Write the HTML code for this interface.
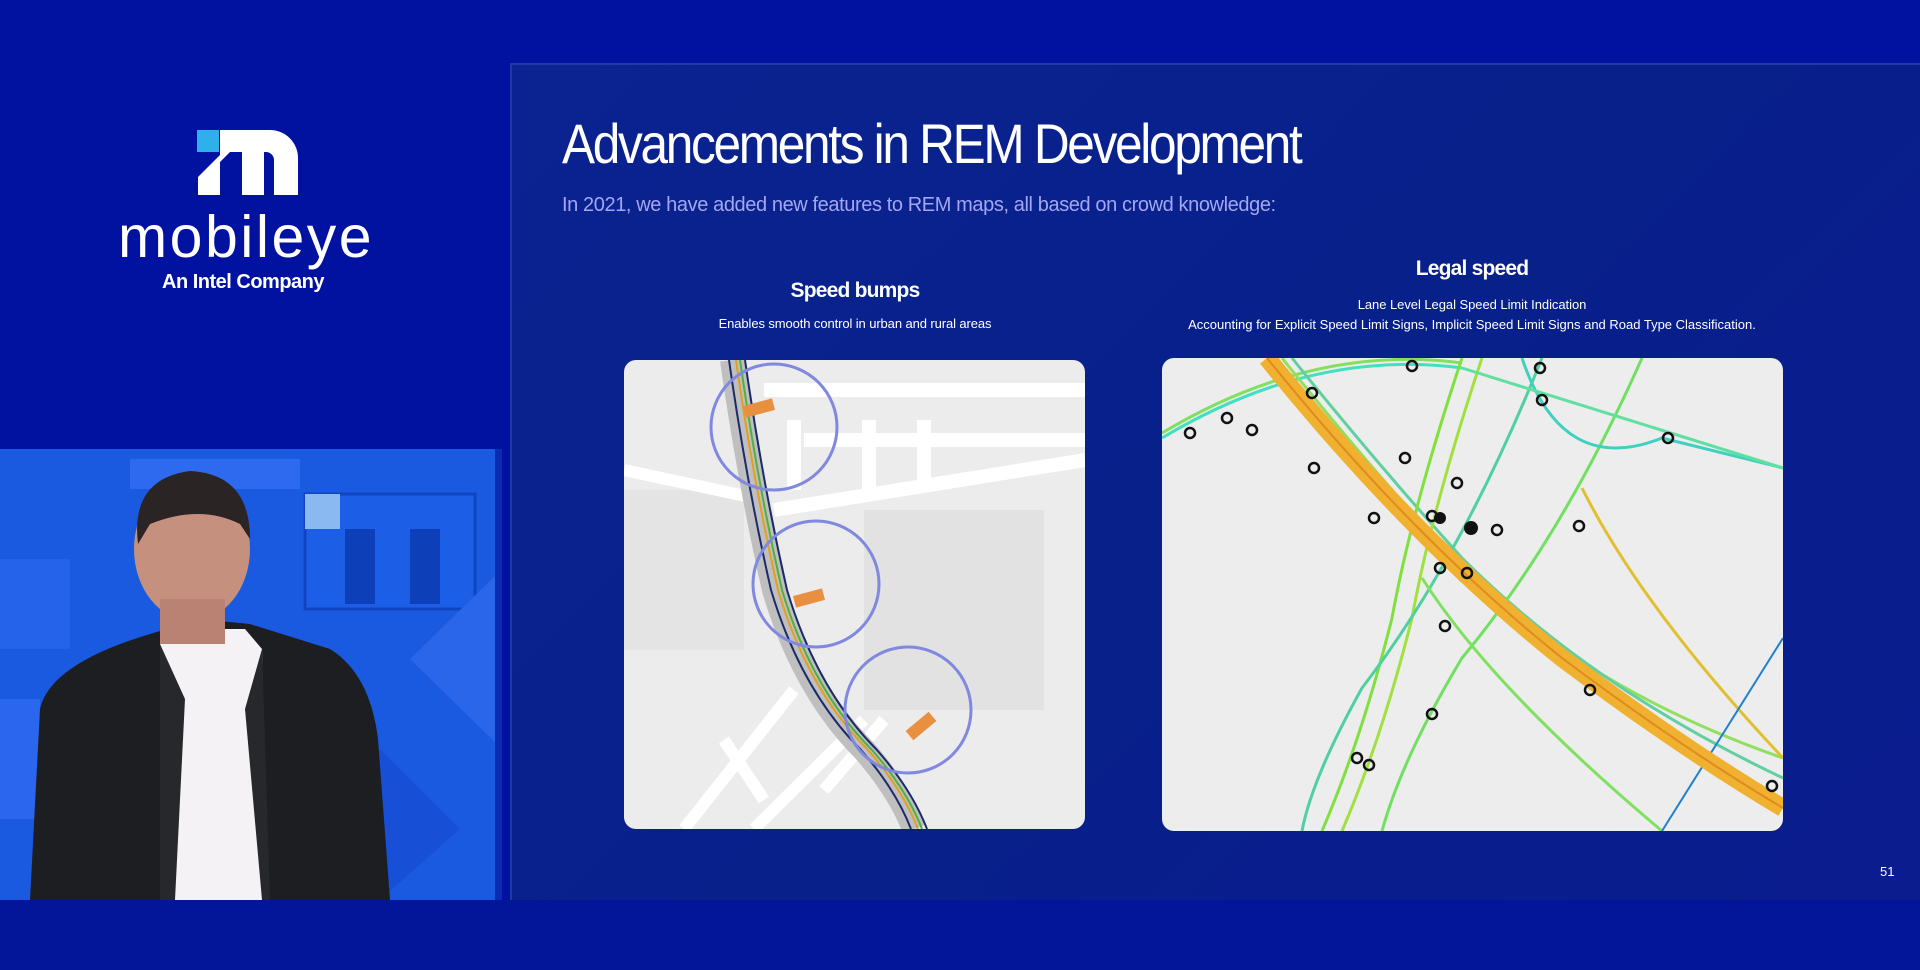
<!DOCTYPE html>
<html><head><meta charset="utf-8"><style>
*{margin:0;padding:0;box-sizing:border-box}
body{width:1920px;height:970px;overflow:hidden;background:#0212a0;font-family:"Liberation Sans",sans-serif;position:relative}
.abs{position:absolute}
.slide{left:510px;top:63px;width:1410px;height:837px;background:linear-gradient(135deg,#0a2390 0%,#08208a 50%,#0a1c8e 100%);border-top:2px solid #1d3aa8;border-left:2px solid #1d3aa8}
.t{color:#fff;white-space:nowrap}
.c{transform:translateX(-50%)}
</style></head><body>
<div class="abs" style="left:0;top:900px;width:1920px;height:70px;background:#03169a"></div>
<div class="abs slide"></div>

<!-- logo -->
<svg class="abs" style="left:190px;top:125px" width="120" height="75" viewBox="0 0 120 75">
<rect x="7" y="5" width="22" height="22" fill="#2fb0ea"/>
<path d="M30 5 H80 A28 28 0 0 1 108 33 V70 H84 V35 A8 8 0 0 0 76 27 H74 V70 H52 V27 H40 L30 37 V70 H8 V52 L30 30 Z" fill="#fff"/>
</svg>
<div class="abs t" style="left:118px;top:206px;font-size:59px;letter-spacing:2.5px;line-height:62px">mobileye</div>
<div class="abs t" style="left:162px;top:271px;font-size:20px;font-weight:bold;letter-spacing:-0.5px">An Intel Company</div>

<!-- video -->
<svg class="abs" style="left:0;top:449px" width="502" height="451" viewBox="0 0 502 451">
<rect width="502" height="451" fill="#1a5ae0"/>
<rect x="130" y="10" width="170" height="30" fill="#2d6af0"/>
<rect x="305" y="45" width="170" height="115" fill="#1d5ee6" stroke="#0f45c0" stroke-width="3"/>
<rect x="345" y="80" width="30" height="75" fill="#0c3fb8"/>
<rect x="410" y="80" width="30" height="75" fill="#0c3fb8"/>
<rect x="305" y="45" width="35" height="35" fill="#8ab8f0"/>
<path d="M410 210 L502 120 V300 Z" fill="#2a66ea"/>
<path d="M380 300 L460 380 L380 451 H300 Z" fill="#1750d6"/>
<rect x="0" y="110" width="70" height="90" fill="#2564ea"/>
<rect x="0" y="250" width="40" height="120" fill="#2a66ee"/>
<rect x="495" y="0" width="7" height="451" fill="#0b2bb0"/>
<path d="M30 451 L40 260 Q50 215 150 185 L200 170 L250 175 L330 200 Q370 225 378 290 L390 451 Z" fill="#1d1e22"/>
<path d="M160 195 L195 180 L245 180 L262 200 L268 451 H175 Z" fill="#f4f2f4"/>
<path d="M160 195 L185 250 L175 451 H160 Z M262 200 L245 260 L262 451 H270 Z" fill="#27282c"/>
<ellipse cx="192" cy="100" rx="58" ry="72" fill="#c6907e"/>
<path d="M138 95 Q130 30 190 22 Q250 25 250 90 L240 75 Q200 55 150 75 Z" fill="#2b2424"/>
<rect x="160" y="150" width="65" height="45" fill="#b98272"/>
</svg>

<!-- slide text -->
<div class="abs t" style="left:562px;top:112px;font-size:56px;letter-spacing:-2.6px;line-height:64px;transform:scaleX(0.885);transform-origin:left">Advancements in REM Development</div>
<div class="abs t" style="left:562px;top:194px;font-size:20px;letter-spacing:-0.4px;color:#a3a6f2">In 2021, we have added new features to REM maps, all based on crowd knowledge:</div>
<div class="abs t c" style="left:855px;top:279px;font-size:21px;font-weight:bold;letter-spacing:-0.8px">Speed bumps</div>
<div class="abs t c" style="left:855px;top:316px;font-size:13px;letter-spacing:-0.1px">Enables smooth control in urban and rural areas</div>
<div class="abs t c" style="left:1472px;top:257px;font-size:21px;font-weight:bold;letter-spacing:-0.8px">Legal speed</div>
<div class="abs t c" style="left:1472px;top:297px;font-size:13px;letter-spacing:-0.05px">Lane Level Legal Speed Limit Indication</div>
<div class="abs t c" style="left:1472px;top:317px;font-size:13px;letter-spacing:0px">Accounting for Explicit Speed Limit Signs, Implicit Speed Limit Signs and Road  Type Classification.</div>
<div class="abs t" style="left:1880px;top:864px;font-size:13px">51</div>

<!-- left map -->
<svg class="abs" style="left:624px;top:360px;border-radius:12px" width="461" height="469" viewBox="0 0 461 469">
<rect width="461" height="469" fill="#ececec"/>
<path d="M140 30 H461 M180 80 H461 M170 130 V60 M245 130 V60 M300 130 V60 M150 150 L461 100" stroke="#fff" stroke-width="14" fill="none"/>
<rect x="240" y="150" width="180" height="200" fill="#e2e2e2"/>
<rect x="0" y="130" width="120" height="160" fill="#e4e4e4"/>
<path d="M0 110 L140 140 M60 469 L170 330 M130 469 L240 360 M200 430 L260 360 M100 380 L140 440" stroke="#fff" stroke-width="12" fill="none"/>
<path d="M108 0 Q125 120 150 230 Q180 330 240 390 Q275 430 290 469" stroke="#bfbfbf" stroke-width="24" fill="none"/>
<path d="M105 0 Q122 120 147 230 Q177 330 237 390 Q272 430 287 469" stroke="#1a2a6a" stroke-width="2" fill="none"/>
<path d="M112 0 Q129 120 154 230 Q184 330 244 390 Q279 430 294 469" stroke="#e0a020" stroke-width="2" fill="none"/>
<path d="M116 0 Q133 120 158 230 Q188 330 248 390 Q283 430 298 469" stroke="#50b040" stroke-width="2" fill="none"/>
<path d="M121 0 Q138 120 163 230 Q193 330 253 390 Q288 430 303 469" stroke="#1a2a6a" stroke-width="2" fill="none"/>
<circle cx="150" cy="67" r="63" fill="none" stroke="#8088e0" stroke-width="3"/>
<circle cx="192" cy="224" r="63" fill="none" stroke="#8088e0" stroke-width="3"/>
<circle cx="284" cy="350" r="63" fill="none" stroke="#8088e0" stroke-width="3"/>
<rect x="120" y="42" width="30" height="12" fill="#e89040" transform="rotate(-15 135 48)"/>
<rect x="170" y="232" width="30" height="12" fill="#e89040" transform="rotate(-15 185 238)"/>
<rect x="282" y="360" width="30" height="12" fill="#e89040" transform="rotate(-40 297 366)"/>
</svg>

<!-- right map -->
<svg class="abs" style="left:1162px;top:358px;border-radius:12px" width="621" height="473" viewBox="0 0 621 473">
<rect width="621" height="473" fill="#ededed"/>
<g fill="none" stroke-width="3">
<path d="M0 80 Q150 -10 300 10" stroke="#40e0c0"/>
<path d="M0 75 Q150 -15 300 5" stroke="#80e060"/>
<path d="M120 0 Q200 100 290 200 Q420 330 621 400" stroke="#90e060"/>
<path d="M130 0 Q210 100 300 200 Q430 330 621 420" stroke="#60d0a0"/>
<path d="M300 0 Q250 150 230 260 Q200 380 160 473" stroke="#80e040"/>
<path d="M320 0 Q270 150 250 260 Q220 380 180 473" stroke="#a0e040"/>
<path d="M380 0 Q300 200 200 330 Q150 420 140 473" stroke="#50d0a0"/>
<path d="M480 0 Q400 180 300 300 Q240 400 220 473" stroke="#70e060"/>
<path d="M360 0 Q400 120 500 80 L621 110" stroke="#40d0c0"/>
<path d="M300 10 L621 110" stroke="#60e0a0"/>
<path d="M420 130 Q480 250 621 400" stroke="#e0c030"/>
<path d="M260 220 Q330 330 500 473" stroke="#80e060"/>
<path d="M621 280 L500 473" stroke="#2080d0" stroke-width="2"/>
</g>
<g fill="none">
<path d="M105 0 Q250 180 400 300 Q520 390 621 450" stroke="#f0b030" stroke-width="18"/>
<path d="M105 0 Q250 180 400 300 Q520 390 621 450" stroke="#e08a20" stroke-width="2"/>
</g>
<g fill="none" stroke="#111" stroke-width="2.5">
<circle cx="28" cy="75" r="5"/><circle cx="65" cy="60" r="5"/><circle cx="90" cy="72" r="5"/><circle cx="150" cy="35" r="5"/>
<circle cx="152" cy="110" r="5"/><circle cx="250" cy="8" r="5"/><circle cx="378" cy="10" r="5"/><circle cx="380" cy="42" r="5"/>
<circle cx="506" cy="80" r="5"/><circle cx="243" cy="100" r="5"/><circle cx="295" cy="125" r="5"/><circle cx="212" cy="160" r="5"/>
<circle cx="270" cy="158" r="5"/><circle cx="335" cy="172" r="5"/><circle cx="417" cy="168" r="5"/><circle cx="278" cy="210" r="5"/>
<circle cx="305" cy="215" r="5"/><circle cx="283" cy="268" r="5"/><circle cx="428" cy="332" r="5"/><circle cx="270" cy="356" r="5"/>
<circle cx="195" cy="400" r="5"/><circle cx="207" cy="407" r="5"/><circle cx="610" cy="428" r="5"/>
</g>
<circle cx="309" cy="170" r="7" fill="#111"/><circle cx="278" cy="160" r="6" fill="#111"/>
</svg>
</body></html>
